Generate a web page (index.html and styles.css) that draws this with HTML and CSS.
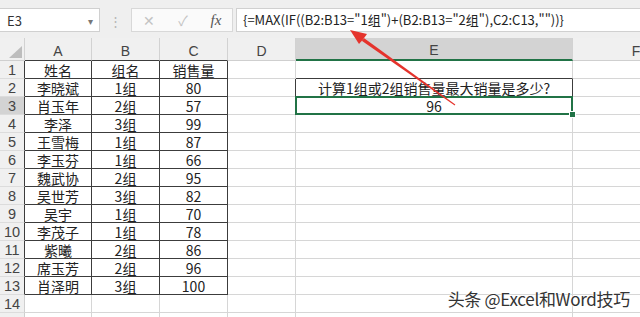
FILE: index.html
```html
<!DOCTYPE html>
<html lang="zh-CN">
<head>
    <meta charset="UTF-8">
    <title>计算1组或2组销售量最大销量</title>
    <link rel="stylesheet" href="styles.css">
</head>
<body>
<div class="screen">
    <div class="formula-bar">
        <div class="name-box"><span>E3</span><span class="caret">▾</span></div>
        <div class="grip">⋮</div>
        <div class="fx-box">
            <span class="fx-btn">✕</span>
            <span class="fx-btn">✓</span>
            <span class="fx">fx</span>
        </div>
        <div class="formula">{=MAX(IF((B2:B13="1组")+(B2:B13="2组"),C2:C13,""))}</div>
    </div>

    <table class="sheet">
        <colgroup>
            <col class="w-rh"><col class="w-a"><col class="w-b"><col class="w-c"><col class="w-d"><col class="w-e"><col class="w-f">
        </colgroup>
        <tr class="head">
            <th class="corner"><svg width="13" height="12" viewBox="0 0 13 12"><polygon points="13,0 13,12 0,12" fill="#bdbdbd"/></svg></th>
            <th class="edge">A</th><th class="edge">B</th><th class="edge">C</th><th>D</th><th class="sel">E</th><th>F</th>
        </tr>
        <tr><th class="rh edge">1</th><td class="d">姓名</td><td class="d">组名</td><td class="d">销售量</td><td></td><td class="e-top"></td><td></td></tr>
        <tr><th class="rh edge">2</th><td class="d">李晓斌</td><td class="d">1组</td><td class="d">80</td><td class="e-left"></td><td class="e-box">计算1组或2组销售量最大销量是多少?</td><td></td></tr>
        <tr><th class="rh edge sel">3</th><td class="d">肖玉年</td><td class="d">2组</td><td class="d">57</td><td class="e-left"></td><td class="e-box active">96</td><td></td></tr>
        <tr><th class="rh edge">4</th><td class="d">李泽</td><td class="d">3组</td><td class="d">99</td><td></td><td></td><td></td></tr>
        <tr><th class="rh edge">5</th><td class="d">王雪梅</td><td class="d">1组</td><td class="d">87</td><td></td><td></td><td></td></tr>
        <tr><th class="rh edge">6</th><td class="d">李玉芬</td><td class="d">1组</td><td class="d">66</td><td></td><td></td><td></td></tr>
        <tr><th class="rh edge">7</th><td class="d">魏武协</td><td class="d">2组</td><td class="d">95</td><td></td><td></td><td></td></tr>
        <tr><th class="rh edge">8</th><td class="d">吴世芳</td><td class="d">3组</td><td class="d">82</td><td></td><td></td><td></td></tr>
        <tr><th class="rh edge">9</th><td class="d">吴宇</td><td class="d">1组</td><td class="d">70</td><td></td><td></td><td></td></tr>
        <tr><th class="rh edge">10</th><td class="d">李茂子</td><td class="d">1组</td><td class="d">78</td><td></td><td></td><td></td></tr>
        <tr><th class="rh edge">11</th><td class="d">紫曦</td><td class="d">2组</td><td class="d">86</td><td></td><td></td><td></td></tr>
        <tr><th class="rh edge">12</th><td class="d">席玉芳</td><td class="d">2组</td><td class="d">96</td><td></td><td></td><td></td></tr>
        <tr><th class="rh edge">13</th><td class="d">肖泽明</td><td class="d">3组</td><td class="d">100</td><td></td><td></td><td></td></tr>
        <tr><th class="rh">14</th><td></td><td></td><td></td><td></td><td></td><td></td></tr>
        <tr><th class="rh"></th><td></td><td></td><td></td><td></td><td></td><td></td></tr>
    </table>

    <svg class="arrow" width="640" height="317" viewBox="0 0 640 317">
        <polygon points="350,30 367,34 363,39.5 359,44" fill="#e5332c"/>
        <polygon points="364.2,38.3 361.8,40.7 454.7,105.4 455.3,104.6" fill="#e5332c"/>
    </svg>

    <div class="watermark">头条 @Excel和Word技巧</div>
</div>
</body>
</html>
```

FILE: styles.css
```css
body {
    margin: 0;
    background-color: #ffffff;
    font-family: "Noto Sans CJK SC", "Noto Sans", sans-serif;
    color: #222;
}
.screen {
    position: relative;
    width: 640px;
    height: 317px;
    overflow: hidden;
}

/* formula bar */
.formula-bar {
    display: flex;
    align-items: center;
    height: 38px;
    padding-top: 2px;
    box-sizing: border-box;
    background-color: #efefef;
}
.name-box {
    display: flex;
    align-items: center;
    justify-content: space-between;
    width: 100px;
    height: 24px;
    padding: 0 6px 0 7px;
    box-sizing: border-box;
    background-color: #fff;
    border: 1px solid #d0d0d0;
    border-left: none;
    font-size: 13px;
    color: #333;
}
.caret {
    font-size: 10px;
    color: #777;
}
.grip {
    width: 31px;
    text-align: center;
    color: #b5b5b5;
    font-size: 13px;
}
.fx-box {
    display: flex;
    align-items: center;
    width: 102px;
    height: 24px;
    box-sizing: border-box;
    background-color: #fafafa;
    border: 1px solid #d8d8d8;
}
.fx-btn {
    width: 34px;
    text-align: center;
    color: #c3c3c3;
    font-size: 14px;
}
.fx {
    width: 32px;
    text-align: center;
    font-family: "Liberation Serif", serif;
    font-style: italic;
    font-size: 15px;
    color: #555;
}
.formula {
    flex: 1;
    height: 24px;
    margin-left: 3px;
    padding-left: 6px;
    box-sizing: border-box;
    background-color: #fff;
    border: 1px solid #d0d0d0;
    border-right: none;
    font-size: 13px;
    line-height: 22px;
    color: #222;
    white-space: nowrap;
}

/* grid */
.sheet {
    border-collapse: separate;
    border-spacing: 0;
    table-layout: fixed;
    width: 700px;
}
.w-rh { width: 25px; }
.w-a { width: 67px; }
.w-b { width: 68px; }
.w-c { width: 68px; }
.w-d { width: 68px; }
.w-e { width: 277px; }
.w-f { width: 127px; }

.sheet td,
.sheet th {
    box-sizing: border-box;
    height: 18px;
    padding: 1px 0 0;
    border-right: 1px solid #d6d6d6;
    border-bottom: 1px solid #d6d6d6;
    text-align: center;
    font-size: 14px;
    font-weight: normal;
    line-height: 16px;
    white-space: nowrap;
    overflow: visible;
}
.sheet .head th {
    height: 23px;
    padding-top: 3px;
    background-color: #f0f0f0;
    border-right-color: #d2d2d2;
    border-bottom-color: #cfcfcf;
    color: #444;
    font-family: "Liberation Sans", sans-serif;
    font-size: 14px;
}
.sheet .head th.corner {
    text-align: right;
    vertical-align: bottom;
    padding: 0 2px 2px 0;
}
.corner svg {
    display: block;
    margin-left: auto;
}
.sheet th.rh {
    background-color: #f0f0f0;
    border-right-color: #cfcfcf;
    border-bottom-color: #dcdcdc;
    color: #444;
    font-family: "Liberation Sans", sans-serif;
    font-size: 14.5px;
}
.sheet .head th.sel {
    background-color: #d3d3d3;
    border-bottom: 2px solid #217346;
}
.sheet th.rh.sel {
    background-color: #d3d3d3;
}
.sheet .head th.edge {
    border-bottom-color: #3c3c3c;
}
.sheet th.rh.edge {
    border-right-color: #3c3c3c;
}
.sheet td.d {
    border-right-color: #3c3c3c;
    border-bottom-color: #3c3c3c;
}
.sheet td.e-top {
    border-bottom-color: #3c3c3c;
}
.sheet td.e-left {
    border-right-color: #3c3c3c;
}
.sheet td.e-box {
    border-right-color: #3c3c3c;
    border-bottom-color: #3c3c3c;
}
.sheet td.active {
    position: relative;
}
.sheet td.active::after {
    content: "";
    position: absolute;
    top: -1px;
    left: -1px;
    right: -1px;
    bottom: -1px;
    border: 2px solid #217346;
}
.sheet td.active::before {
    content: "";
    position: absolute;
    right: -4px;
    bottom: -4px;
    width: 5px;
    height: 5px;
    background-color: #217346;
    border: 1px solid #fff;
    z-index: 1;
}

/* overlays */
.arrow {
    position: absolute;
    left: 0;
    top: 0;
    pointer-events: none;
}
.watermark {
    position: absolute;
    right: 10px;
    bottom: 6px;
    font-size: 17px;
    color: #333;
    text-shadow: 0 0 2px #fff, 0 0 2px #fff;
    letter-spacing: -0.3px;
}
```
